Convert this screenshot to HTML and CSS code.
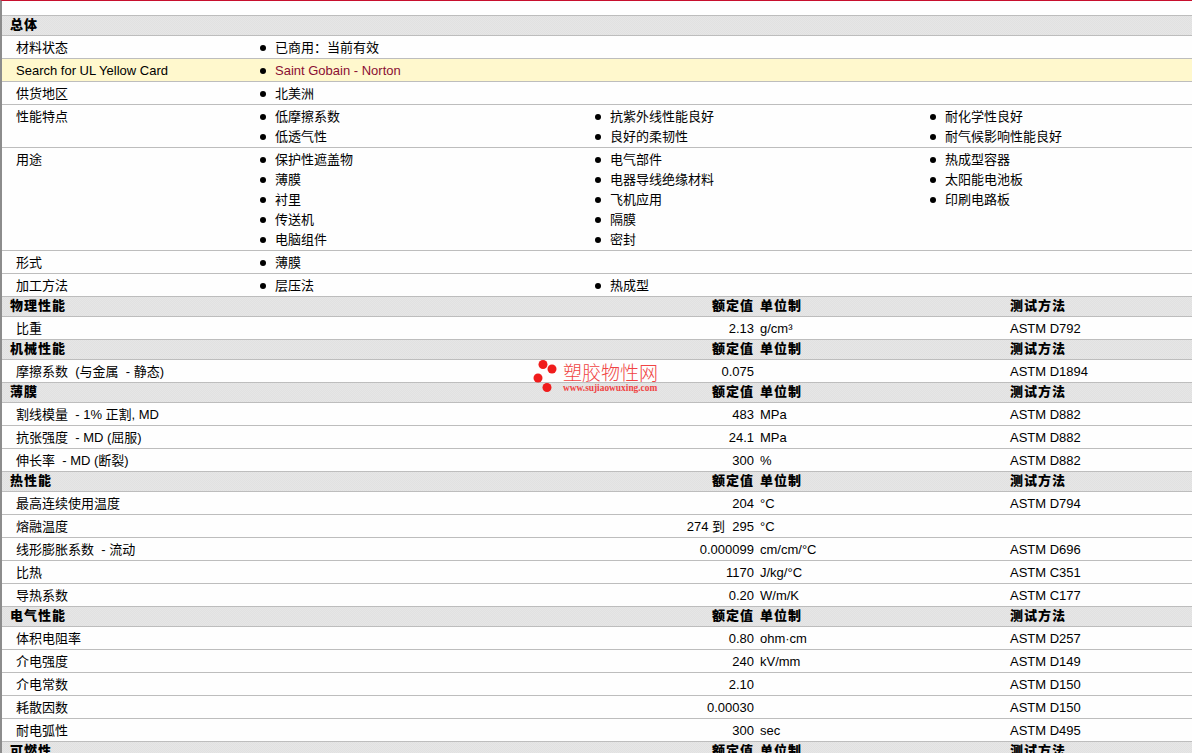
FILE: index.html
```html
<!DOCTYPE html>
<html lang="zh">
<head>
<meta charset="utf-8">
<title>物性表</title>
<link rel="stylesheet" href="styles.css">
</head>
<body>
<main class="sheet">
  <div class="head"><b class="h-title">总体</b></div>
  <div class="row"><span class="label">材料状态</span><ul class="list"><li>已商用：当前有效</li></ul></div>
  <div class="row yellow"><span class="label">Search for UL Yellow Card</span><ul class="list"><li class="maroon">Saint Gobain - Norton</li></ul></div>
  <div class="row"><span class="label">供货地区</span><ul class="list"><li>北美洲</li></ul></div>
  <div class="row"><span class="label">性能特点</span><ul class="list"><li>低摩擦系数</li><li>抗紫外线性能良好</li><li>耐化学性良好</li><li>低透气性</li><li>良好的柔韧性</li><li>耐气候影响性能良好</li></ul></div>
  <div class="row"><span class="label">用途</span><ul class="list"><li>保护性遮盖物</li><li>电气部件</li><li>热成型容器</li><li>薄膜</li><li>电器导线绝缘材料</li><li>太阳能电池板</li><li>衬里</li><li>飞机应用</li><li>印刷电路板</li><li>传送机</li><li>隔膜</li><li></li><li>电脑组件</li><li>密封</li><li></li></ul></div>
  <div class="row"><span class="label">形式</span><ul class="list"><li>薄膜</li></ul></div>
  <div class="row"><span class="label">加工方法</span><ul class="list"><li>层压法</li><li>热成型</li></ul></div>

  <div class="head data"><b class="h-title">物理性能</b><b class="val">额定值</b><b>单位制</b><b>测试方法</b></div>
  <div class="row data"><span class="label">比重</span><span class="val">2.13</span><span>g/cm³</span><span>ASTM D792</span></div>

  <div class="head data"><b class="h-title">机械性能</b><b class="val">额定值</b><b>单位制</b><b>测试方法</b></div>
  <div class="row data"><span class="label">摩擦系数&nbsp; (与金属&nbsp; - 静态)</span><span class="val">0.075</span><span></span><span>ASTM D1894</span></div>

  <div class="head data"><b class="h-title">薄膜</b><b class="val">额定值</b><b>单位制</b><b>测试方法</b></div>
  <div class="row data"><span class="label">割线模量&nbsp; - 1% 正割, MD</span><span class="val">483</span><span>MPa</span><span>ASTM D882</span></div>
  <div class="row data"><span class="label">抗张强度&nbsp; - MD (屈服)</span><span class="val">24.1</span><span>MPa</span><span>ASTM D882</span></div>
  <div class="row data"><span class="label">伸长率&nbsp; - MD (断裂)</span><span class="val">300</span><span>%</span><span>ASTM D882</span></div>

  <div class="head data"><b class="h-title">热性能</b><b class="val">额定值</b><b>单位制</b><b>测试方法</b></div>
  <div class="row data"><span class="label">最高连续使用温度</span><span class="val">204</span><span>°C</span><span>ASTM D794</span></div>
  <div class="row data"><span class="label">熔融温度</span><span class="val">274 到&nbsp; 295</span><span>°C</span><span></span></div>
  <div class="row data"><span class="label">线形膨胀系数&nbsp; - 流动</span><span class="val">0.000099</span><span>cm/cm/°C</span><span>ASTM D696</span></div>
  <div class="row data"><span class="label">比热</span><span class="val">1170</span><span>J/kg/°C</span><span>ASTM C351</span></div>
  <div class="row data"><span class="label">导热系数</span><span class="val">0.20</span><span>W/m/K</span><span>ASTM C177</span></div>

  <div class="head data"><b class="h-title">电气性能</b><b class="val">额定值</b><b>单位制</b><b>测试方法</b></div>
  <div class="row data"><span class="label">体积电阻率</span><span class="val">0.80</span><span>ohm·cm</span><span>ASTM D257</span></div>
  <div class="row data"><span class="label">介电强度</span><span class="val">240</span><span>kV/mm</span><span>ASTM D149</span></div>
  <div class="row data"><span class="label">介电常数</span><span class="val">2.10</span><span></span><span>ASTM D150</span></div>
  <div class="row data"><span class="label">耗散因数</span><span class="val">0.00030</span><span></span><span>ASTM D150</span></div>
  <div class="row data"><span class="label">耐电弧性</span><span class="val">300</span><span>sec</span><span>ASTM D495</span></div>

  <div class="head data"><b class="h-title">可燃性</b><b class="val">额定值</b><b>单位制</b><b>测试方法</b></div>
</main>
<div class="mark">
  <svg class="mark-dots" width="26" height="34" viewBox="0 0 26 34" aria-hidden="true"><circle cx="10" cy="4.5" r="4.5"/><circle cx="19" cy="9" r="4.5"/><circle cx="5" cy="18" r="4.5"/><circle cx="14" cy="27.5" r="4.5"/></svg>
  <div class="mark-text"><span class="mark-cn">塑胶物性网</span><span class="mark-url">www.sujiaowuxing.com</span></div>
</div>
</body>
</html>
```
FILE: styles.css
```css
html, body { margin: 0; height: 753px; overflow: hidden; background: #fff; }
body { position: relative; font: 13px/20px "Liberation Sans", "Noto Sans CJK SC", sans-serif; color: #000; }
.sheet { border-top: 1px solid #c8102e; border-left: 2px solid #8c8c8c; padding-top: 14px; }
.head, .row { display: grid; box-sizing: border-box; border-top: 1px solid #bdbdbd; }
.head { height: 20px; background: repeating-conic-gradient(#e6e6e6 0 25%, #e1e1e1 0 50%) 0 0 / 2px 2px; line-height: 18px; }
.row { height: 23px; padding-top: 2px; grid-template-columns: 256px 1fr; background: #fefefe; }
.row:has(li:nth-child(4)) { height: 43px; }
.row:has(li:nth-child(7)) { height: 103px; }
.head.data, .row.data { grid-template-columns: 256px 502px 250px 1fr; }
.h-title { padding-left: 8px; }
.head b { letter-spacing: 1px; white-space: nowrap; font-weight: 900; }
.label { padding-left: 14px; white-space: nowrap; }
.val { text-align: right; padding-right: 6px; }
.yellow { background: #fff8cd; }
.maroon { color: #8a0f33; }
.list { display: grid; grid-template-columns: 335px 335px 1fr; margin: 0; padding: 0; list-style: none; }
.list li { position: relative; padding-left: 17px; height: 20px; }
.list li:not(:empty)::before { content: ""; position: absolute; left: 2px; top: 7px; width: 6px; height: 6px; border-radius: 50%; background: #000; }
.mark { position: absolute; left: 533px; top: 360px; display: flex; gap: 4px; }
.mark-dots { fill: #f01c1c; }
.mark-text { display: flex; flex-direction: column; color: #f04444; padding-top: 4px; }
.mark-cn { font-size: 19px; line-height: 20px; font-weight: 300; white-space: nowrap; }
.mark-url { font: bold 9.4px/9px "Liberation Serif", serif; white-space: nowrap; }
```
